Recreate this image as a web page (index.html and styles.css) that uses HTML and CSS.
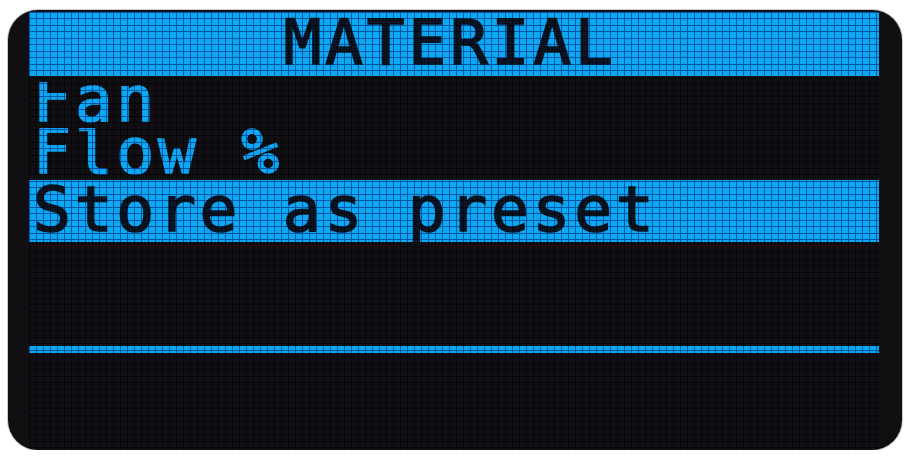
FILE: index.html
```html
<!DOCTYPE html>
<html>
<head>
<meta charset="utf-8">
<link rel="stylesheet" href="styles.css">
</head>
<body>
<div class="device">
  <div class="screen">
    <div class="header"><span class="line">MATERIAL</span></div>
    <div class="row row-fan"><span class="line">Fan</span></div>
    <div class="row row-flow"><span class="line">Flow %</span></div>
    <div class="row row-sel"><span class="line">Store as preset</span></div>
    <div class="spacer"></div>
    <div class="status-line"></div>
  </div>
</div>
</body>
</html>
```
FILE: styles.css
```css
html, body {
  margin: 0;
  padding: 0;
  background: #ffffff;
}

.device {
  box-sizing: border-box;
  width: 894px;
  height: 440px;
  margin: 10px 0 0 8px;
  padding: 2px 23px 0 21px;
  background: #110f12;
  border-radius: 30px;
  box-shadow: 0 0 0 1px #c9c9c9;
  overflow: hidden;
}

.screen {
  position: relative;
  display: flex;
  flex-direction: column;
  width: 850px;
  height: 438px;
  font-family: "DejaVu Sans Mono", "Liberation Mono", monospace;
  font-size: 63px;
  letter-spacing: 3.7px;
  color: #0ca8f2;
  -webkit-text-stroke: 1.6px currentColor;
}

.screen::after {
  content: "";
  position: absolute;
  inset: 0;
  pointer-events: none;
  mix-blend-mode: multiply;
  background-image:
    repeating-linear-gradient(90deg, rgb(60, 130, 175) 0 1px, transparent 1px 7px),
    repeating-linear-gradient(180deg, rgb(60, 130, 175) 0 1px, transparent 1px 6.5px);
}

.line {
  display: block;
  line-height: 46px;
  height: 46px;
  white-space: pre;
}

.header {
  height: 64px;
  box-sizing: border-box;
  padding: 8px 8px 10px 0;
  background: #0ca8f2;
  color: #0b1420;
  text-align: center;
}

.row {
  box-sizing: border-box;
  padding-left: 4px;
  overflow: hidden;
}

.row-fan {
  margin-top: 6px;
  height: 46px;
}

.row-fan .line {
  margin-top: -5px;
}

.row-flow {
  height: 52px;
  padding-top: 1px;
}

.row-sel {
  height: 62px;
  padding-top: 7px;
  background: #0ca8f2;
  color: #0b1420;
}

.spacer {
  height: 104px;
}

.status-line {
  height: 7px;
  background: #0ca8f2;
}
```
